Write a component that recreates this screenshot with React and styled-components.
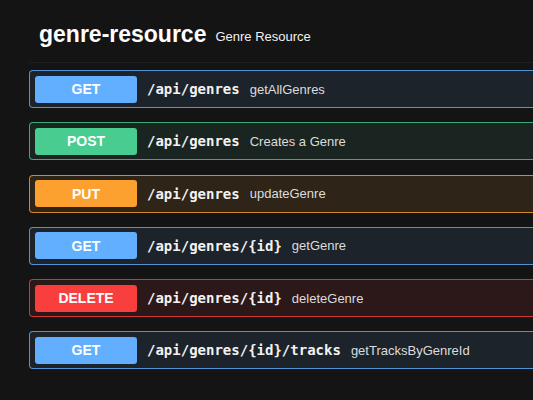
import React from "react";
import styled, { createGlobalStyle } from "styled-components";

const methods = {
  GET: { color: "#61affe", bg: "#1d232b" },
  POST: { color: "#49cc90", bg: "#1a2521" },
  PUT: { color: "#fca130", bg: "#2e2418" },
  DELETE: { color: "#f93e3e", bg: "#2c1818" },
};

const ops = [
  { method: "GET", path: "/api/genres", summary: "getAllGenres" },
  { method: "POST", path: "/api/genres", summary: "Creates a Genre" },
  { method: "PUT", path: "/api/genres", summary: "updateGenre" },
  { method: "GET", path: "/api/genres/{id}", summary: "getGenre" },
  { method: "DELETE", path: "/api/genres/{id}", summary: "deleteGenre" },
  { method: "GET", path: "/api/genres/{id}/tracks", summary: "getTracksByGenreId" },
];

const GlobalStyle = createGlobalStyle`
  html, body {
    margin: 0;
    background: #141414;
    overflow: hidden;
  }
  body {
    font-family: "Liberation Sans", Arial, sans-serif;
    color: #e6e6e6;
  }
`;

export default function App() {
  return (
    <>
      <GlobalStyle />
      <Page>
        <Header>
          <Tag>genre-resource</Tag>
          <TagDesc>Genre Resource</TagDesc>
        </Header>
        <List>
          {ops.map((op, i) => (
            <Row key={i} $color={methods[op.method].color} $bg={methods[op.method].bg}>
              <Badge $color={methods[op.method].color}>{op.method}</Badge>
              <Path>{op.path}</Path>
              <Summary>{op.summary}</Summary>
            </Row>
          ))}
        </List>
      </Page>
    </>
  );
}

const Page = styled.div`
  padding: 21px 0 0 29px;
  width: 560px;
`;

const Header = styled.div`
  display: flex;
  align-items: center;
  gap: 9px;
  padding: 0 0 14px 10px;
  border-bottom: 1px solid #1f1f1f;
`;

const Tag = styled.span`
  font-size: 23px;
  font-weight: 700;
  color: #ffffff;
`;

const TagDesc = styled.span`
  margin-top: 3px;
  font-size: 13px;
  color: #f0f0f0;
`;

const List = styled.div`
  display: flex;
  flex-direction: column;
  gap: 14.25px;
  margin-top: 7px;
`;

const Row = styled.div`
  display: flex;
  align-items: center;
  height: 38px;
  box-sizing: border-box;
  padding: 0 5px;
  border: 1px solid ${(p) => p.$color}cc;
  border-radius: 4px;
  background: ${(p) => p.$bg};
`;

const Badge = styled.div`
  width: 102px;
  height: 27px;
  flex-shrink: 0;
  display: flex;
  align-items: center;
  justify-content: center;
  border-radius: 3px;
  background: ${(p) => p.$color};
  color: #ffffff;
  font-size: 14px;
  font-weight: 700;
`;

const Path = styled.span`
  margin-left: 10px;
  font-family: "DejaVu Sans Mono", monospace;
  font-size: 14px;
  font-weight: 700;
  color: #f2f2f2;
`;

const Summary = styled.span`
  margin-left: 10px;
  font-size: 13px;
  color: #dcdcdc;
`;
